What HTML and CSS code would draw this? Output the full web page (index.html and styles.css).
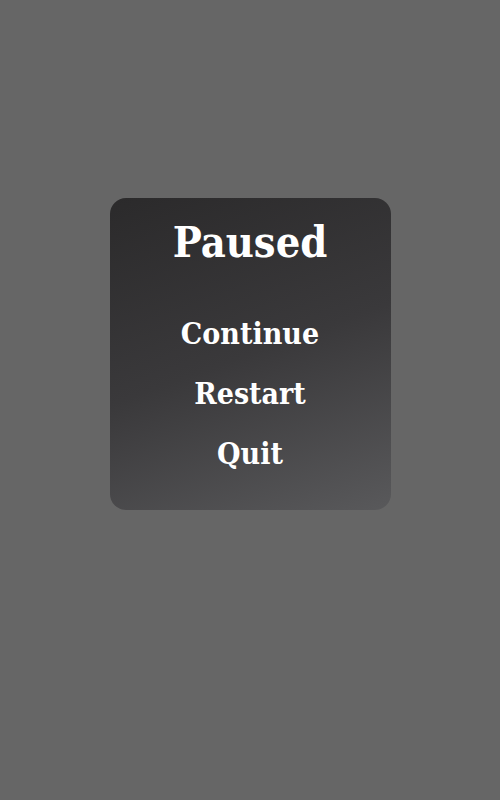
FILE: index.html
```html
<!DOCTYPE html>
<html>
<head>
<meta charset="utf-8">
<link rel="stylesheet" href="styles.css">
</head>
<body>
<div class="screen">
  <div class="card">
    <h1 class="title">Paused</h1>
    <ul class="menu">
      <li class="item">Continue</li>
      <li class="item">Restart</li>
      <li class="item">Quit</li>
    </ul>
  </div>
</div>
</body>
</html>
```
FILE: styles.css
```css
html, body {
  margin: 0;
  padding: 0;
  background: #666666;
}
.screen {
  width: 500px;
  height: 800px;
  display: flex;
  align-items: flex-start;
  justify-content: center;
  padding-top: 198px;
  box-sizing: border-box;
}
.card {
  width: 281px;
  height: 312px;
  border-radius: 16px;
  background: linear-gradient(160deg, #2b2a2b 0%, #3a393b 50%, #59595b 100%);
  box-sizing: border-box;
  padding-top: 16px;
  display: flex;
  flex-direction: column;
  align-items: center;
  font-family: "DejaVu Serif", serif;
  font-stretch: condensed;
  font-weight: bold;
  color: #ffffff;
}
.title {
  margin: 0;
  font-size: 43px;
  line-height: 56px;
  font-weight: bold;
}
.menu {
  list-style: none;
  margin: 46px 0 0 0;
  padding: 0;
  display: flex;
  flex-direction: column;
  align-items: center;
  gap: 24px;
}
.item {
  font-size: 30px;
  line-height: 36px;
}
```
